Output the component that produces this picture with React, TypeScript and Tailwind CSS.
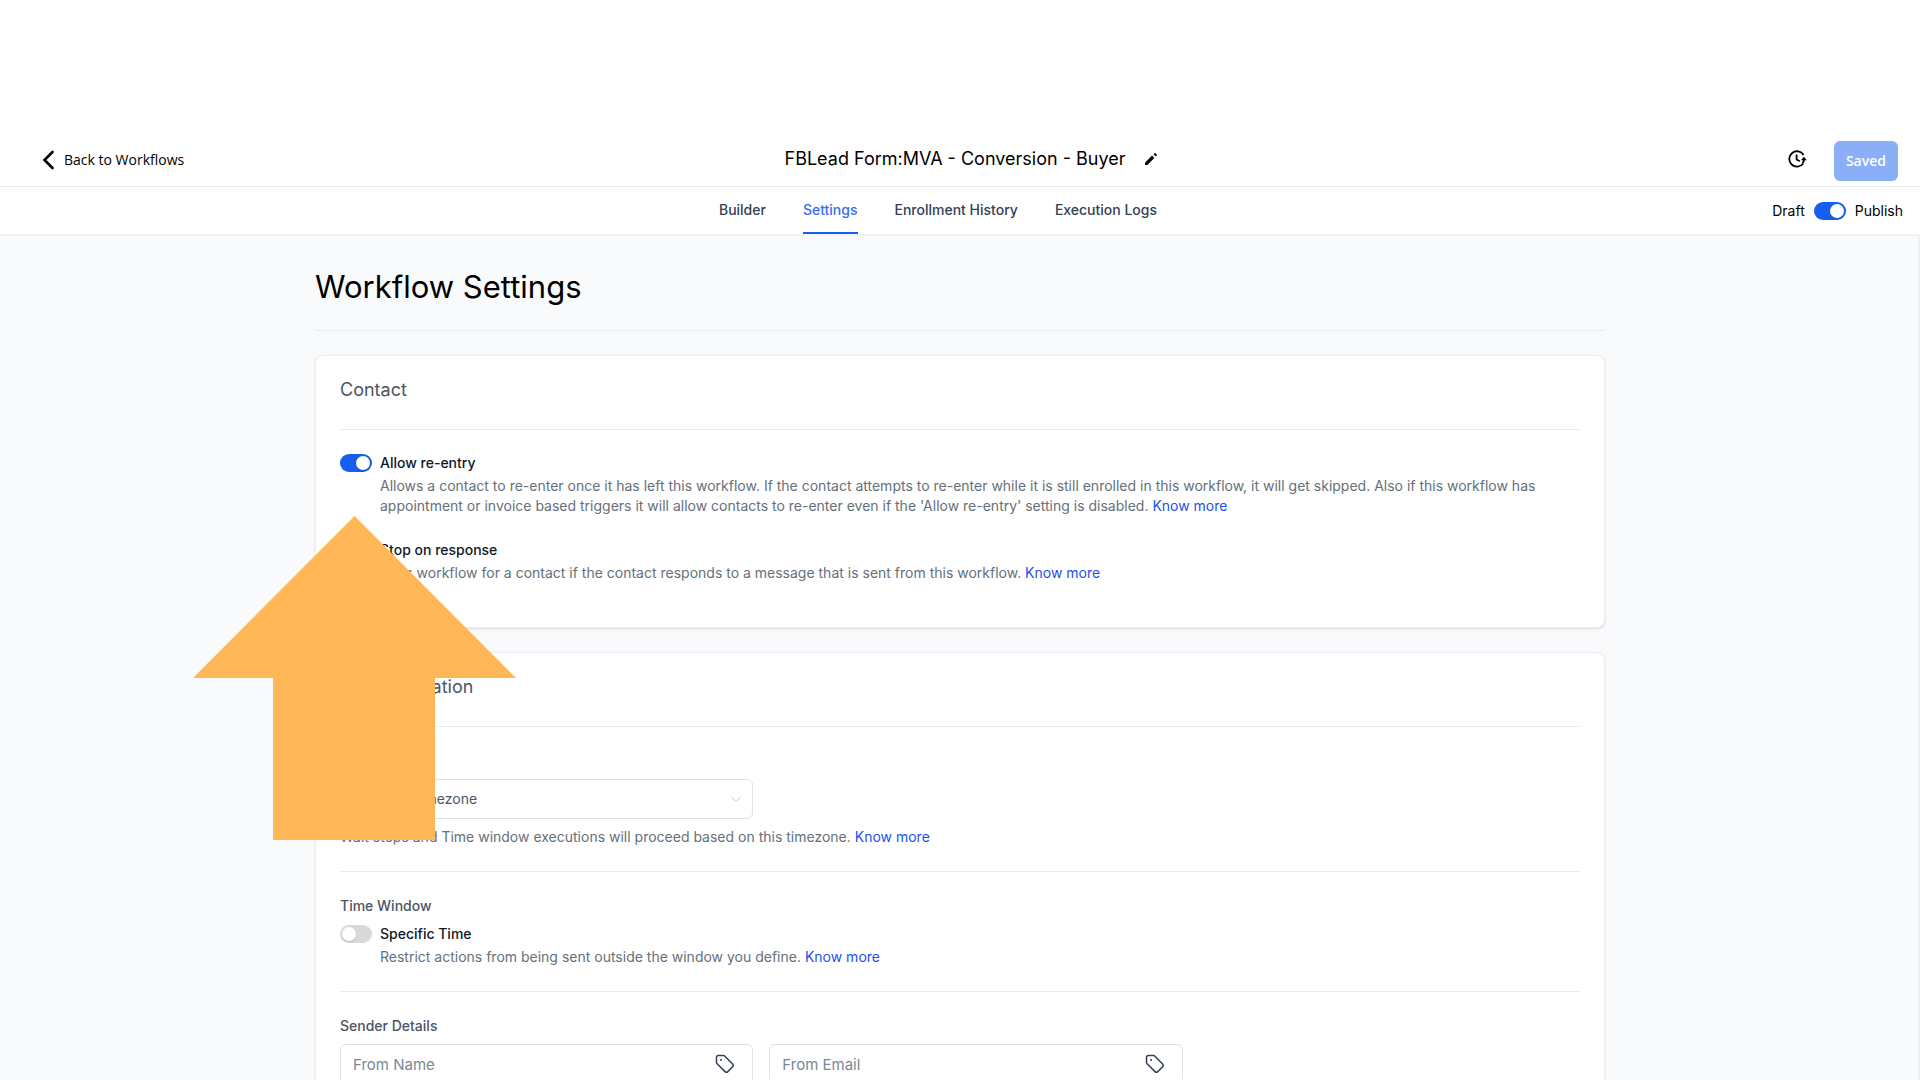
import React from "react";

const tabs = ["Builder", "Settings", "Enrollment History", "Execution Logs"];

function Toggle({ id, on = false }: { id: string; on?: boolean }) {
  return (
    <input
      id={id}
      type="checkbox"
      role="switch"
      defaultChecked={on}
      className="flex h-[18px] w-8 shrink-0 cursor-pointer appearance-none items-center rounded-full bg-[#d9d9d9] px-0.5 before:h-3.5 before:w-3.5 before:rounded-full before:bg-white before:shadow before:content-[''] checked:justify-end checked:bg-[#155eef]"
    />
  );
}

function KnowMore() {
  return (
    <a href="#" className="text-[#1d4ff0]">
      Know more
    </a>
  );
}

function Card({ title, children }: { title: string; children: React.ReactNode }) {
  return (
    <section className="rounded-lg border border-[#eceef2] bg-white px-6 pb-6 shadow">
      <h2 className="border-b border-[#eaecf0] pt-5 pb-[25px] text-lg text-[#4b5563]">{title}</h2>
      {children}
    </section>
  );
}

type OptionProps = { id: string; label: string; on?: boolean; children: React.ReactNode };

function Option({ id, label, on, children }: OptionProps) {
  return (
    <div className="flex gap-2">
      <div className="flex h-5 items-center">
        <Toggle id={id} on={on} />
      </div>
      <div>
        <label htmlFor={id} className="block text-sm font-medium text-[#101828]">
          {label}
        </label>
        <p className="mt-[3px] text-sm text-[#66707a]">
          {children} <KnowMore />
        </p>
      </div>
    </div>
  );
}

function TagIcon() {
  return (
    <svg className="h-5 w-5" viewBox="0 0 20 20" fill="none" stroke="#344054" strokeWidth="1.5" strokeLinejoin="round">
      <path d="M1.5 3.2a1.7 1.7 0 0 1 1.7-1.7h5a2 2 0 0 1 1.5.6l7.9 7.9a2 2 0 0 1 0 2.8l-4.8 4.8a2 2 0 0 1-2.8 0L2.1 9.7a2 2 0 0 1-.6-1.5z" />
      <circle cx="6" cy="6" r="1" fill="#344054" stroke="none" />
    </svg>
  );
}

function SenderField({ label }: { label: string }) {
  return (
    <div className="flex h-10 w-1/3 items-center rounded-md border border-[#dfe1e6] bg-white pr-[17px]">
      <input
        type="text"
        aria-label={label}
        placeholder={label}
        className="h-full min-w-0 flex-1 bg-transparent pl-3 text-[15px] outline-none placeholder:text-[#7b8794]"
      />
      <button type="button" aria-label={`Insert value for ${label}`}>
        <TagIcon />
      </button>
    </div>
  );
}

export default function App() {
  return (
    <div className="relative flex h-screen flex-col overflow-hidden bg-white font-['Inter',sans-serif] text-black">
      <header className="mt-[134px] grid h-[53px] shrink-0 grid-cols-[1fr_auto_1fr] items-center border-b border-[#eaecf0]">
        <a href="#" className="flex items-center gap-2.5 pl-[42px] font-['Open_Sans',sans-serif] text-sm font-medium">
          <svg className="h-5 w-3" viewBox="0 0 12 20" fill="none" stroke="currentColor" strokeWidth="2.6" strokeLinecap="round">
            <path d="M10.5 2 2.5 10l8 8" />
          </svg>
          Back to Workflows
        </a>
        <div className="flex items-center gap-5 pb-0.5 pl-[22px]">
          <h1 className="text-lg">FBLead Form:MVA - Conversion - Buyer</h1>
          <button type="button" aria-label="Rename workflow">
            <svg className="h-3 w-3" viewBox="0 0 12 12" fill="currentColor">
              <path d="M0 12V9.7L7.1 2.6 9.4 4.9 2.3 12z" />
              <path d="M8.5 1.3 9.4.4a1 1 0 0 1 1.4 0l.8.8a1 1 0 0 1 0 1.400l-.9.9z" />
            </svg>
          </button>
        </div>
        <div className="flex items-center justify-end gap-[27px] pt-0.5 pr-[22px]">
          <button type="button" aria-label="Version history" className="pb-1">
            <svg className="h-[18px] w-[19px]" viewBox="0 0 19 18" fill="none" stroke="currentColor" strokeWidth="1.8">
              <path d="M15.2 13.5A7.7 7.7 0 1 1 15.6 5" />
              <path d="M8.6 4.5V9.5l3.2 1.8" />
              <path d="M13 10.2h5.8l-2.9-3.4z" fill="currentColor" stroke="none" />
              <path d="M15.9 9.5c0 1.2-.5 2.6-1.2 3.6" />
            </svg>
          </button>
          <button
            type="button"
            className="h-10 rounded-md bg-[#8aaef8] px-3 font-['Open_Sans',sans-serif] text-sm font-semibold text-white"
          >
            Saved
          </button>
        </div>
      </header>

      <div className="grid h-[49px] shrink-0 grid-cols-[1fr_auto_1fr] border-b-2 border-[#f0f2f5]">
        <nav className="col-start-2 flex gap-[37px] pr-11">
          {tabs.map((tab) => (
            <a
              key={tab}
              href="#"
              className={
                tab === "Settings"
                  ? "flex items-center border-b-2 border-[#155eef] text-sm font-medium text-[#3b6cf6]"
                  : "flex items-center border-b-2 border-transparent text-sm font-medium text-[#344054]"
              }
            >
              {tab}
            </a>
          ))}
        </nav>
        <div className="flex items-center justify-end gap-[9px] pr-[17px] text-sm">
          <span>Draft</span>
          <Toggle id="publish" on />
          <label htmlFor="publish">Publish</label>
        </div>
      </div>

      <main className="min-h-0 flex-1 overflow-hidden bg-[#f9fafb] shadow-[inset_-2px_0_#eff0f3]">
        <div className="mx-auto w-full max-w-[1290px]">
          <h2 className="border-b border-[#eaecf0] pt-[31px] pb-[23px] text-[31px] leading-10">Workflow Settings</h2>

          <div className="mt-6 flex flex-col gap-6">
            <Card title="Contact">
              <div className="flex flex-col gap-6 pt-[23px] pb-5">
                <Option id="re-entry" label="Allow re-entry" on>
                  Allows a contact to re-enter once it has left this workflow. If the contact attempts to re-enter while it is
                  still enrolled in this workflow, it will get skipped. Also if this workflow has appointment or invoice based
                  triggers it will allow contacts to re-enter even if the 'Allow re-entry' setting is disabled.
                </Option>
                <Option id="stop-response" label="Stop on response">
                  Ends workflow for a contact if the contact responds to a message that is sent from this workflow.
                </Option>
              </div>
            </Card>

            <Card title="Communication">
              <div className="border-b border-[#eaecf0] py-6">
                <label htmlFor="timezone" className="block text-sm font-medium text-[#4b5563]">
                  Timezone
                </label>
                <div className="relative mt-2 w-1/3">
                  <select
                    id="timezone"
                    className="h-10 w-full appearance-none rounded-md border border-[#dfe1e6] bg-white pl-3 text-sm text-[#4b5563]"
                  >
                    <option>Account Timezone</option>
                  </select>
                  <svg
                    className="pointer-events-none absolute top-[15px] right-3 h-2.5 w-2.5"
                    viewBox="0 0 10 10"
                    fill="none"
                    stroke="#c2c5cc"
                  >
                    <path d="M0 2.5 5 7.5l5-5" />
                  </svg>
                </div>
                <p className="mt-2 text-sm text-[#66707a]">
                  Wait steps and Time window executions will proceed based on this timezone. <KnowMore />
                </p>
              </div>

              <div className="border-b border-[#eaecf0] py-6">
                <h3 className="mb-2 text-sm font-medium text-[#4b5563]">Time Window</h3>
                <Option id="specific-time" label="Specific Time">
                  Restrict actions from being sent outside the window you define.
                </Option>
              </div>

              <div className="pt-6">
                <h3 className="mb-2 text-sm font-medium text-[#4b5563]">Sender Details</h3>
                <div className="flex gap-4">
                  <SenderField label="From Name" />
                  <SenderField label="From Email" />
                </div>
              </div>
            </Card>
          </div>
        </div>
      </main>

      {/* Callout arrow pointing at the re-entry switch */}
      <svg
        className="pointer-events-none absolute top-[516px] left-[193px] h-[324px] w-[323px]"
        viewBox="0 0 323 324"
        fill="#ffb757"
        aria-hidden="true"
      >
        <path d="M161.5 0 323 162H242V324H80V162H0z" />
      </svg>
    </div>
  );
}
